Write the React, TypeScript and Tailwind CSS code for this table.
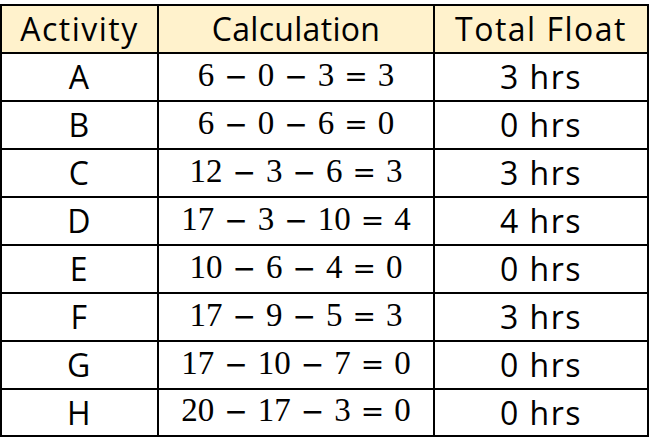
const rows = [
  { id: "A", calc: "6 − 0 − 3 = 3", total: "3 hrs" },
  { id: "B", calc: "6 − 0 − 6 = 0", total: "0 hrs" },
  { id: "C", calc: "12 − 3 − 6 = 3", total: "3 hrs" },
  { id: "D", calc: "17 − 3 − 10 = 4", total: "4 hrs" },
  { id: "E", calc: "10 − 6 − 4 = 0", total: "0 hrs" },
  { id: "F", calc: "17 − 9 − 5 = 3", total: "3 hrs" },
  { id: "G", calc: "17 − 10 − 7 = 0", total: "0 hrs" },
  { id: "H", calc: "20 − 17 − 3 = 0", total: "0 hrs" },
];

const comic = "font-['Comic_Sans_MS','Open_Sans',sans-serif] text-[32px] leading-none tracking-[1.5px]";

// numbers in a serif, operators in DejaVu Sans for the long math-style strokes
const Calc = ({ text }: { text: string }) => (
  <div className="flex items-baseline gap-[10px] leading-none">
    {text.split(" ").map((t, i) =>
      /\d/.test(t) ? (
        <span key={i} className="font-['Liberation_Serif',serif] text-[33px]">{t}</span>
      ) : (
        <span key={i} className="font-['DejaVu_Sans',sans-serif] text-[28px]">{t}</span>
      )
    )}
  </div>
);

export default function App() {
  return (
    <div className="w-[650px] h-[439px] bg-white pt-1 overflow-hidden">
      <div className="w-[649px] border-2 border-black text-black">
        <div className={`grid grid-cols-[157px_276px_212px] h-[48px] bg-[#fff2cc] border-b-2 border-black ${comic}`}>
          <div className="flex items-center justify-center border-r-2 border-black">Activity</div>
          <div className="flex items-center justify-center border-r-2 border-black tracking-[0.3px]">Calculation</div>
          <div className="flex items-center justify-center">Total Float</div>
        </div>
        {rows.map((r, i) => (
          <div
            key={r.id}
            className={`grid grid-cols-[157px_276px_212px] ${i < rows.length - 1 ? "h-[48px] border-b-2 border-black" : "h-[45px]"}`}
          >
            <div className={`flex items-center justify-center border-r-2 border-black ${comic}`}>{r.id}</div>
            <div className="flex items-center justify-center border-r-2 border-black pb-1">
              <Calc text={r.calc} />
            </div>
            <div className={`flex items-center justify-center ${comic}`}>{r.total}</div>
          </div>
        ))}
      </div>
    </div>
  );
}
